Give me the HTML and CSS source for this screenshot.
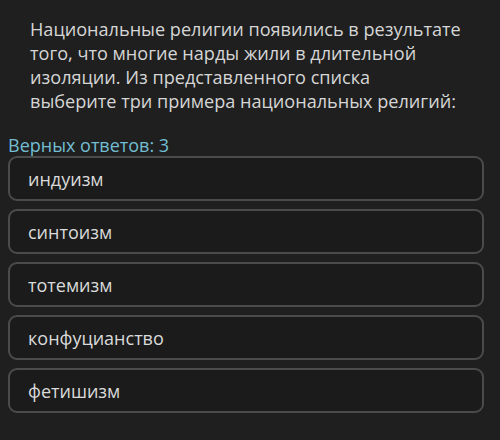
FILE: index.html
```html
<!DOCTYPE html>
<html lang="ru">
<head>
    <meta charset="UTF-8">
    <title>Тест</title>
    <link rel="stylesheet" href="styles.css">
</head>
<body>
    <div class="question">
        Национальные религии появились в результате<br>
        того, что многие нарды жили в длительной<br>
        изоляции. Из представленного списка<br>
        выберите три примера национальных религий:
    </div>
    <div class="answers-count">Верных ответов: 3</div>
    <ul class="options">
        <li>индуизм</li>
        <li>синтоизм</li>
        <li>тотемизм</li>
        <li>конфуцианство</li>
        <li>фетишизм</li>
    </ul>
</body>
</html>
```

FILE: styles.css
```css
body {
    margin: 0;
    background-color: #1f1f1f;
    font-family: "Open Sans", Arial, sans-serif;
    color: #d6d6d6;
    width: 500px;
    height: 440px;
}
.question {
    padding: 17px 20px 0 30px;
    font-size: 18.1px;
    line-height: 24px;
    white-space: nowrap;
}
.answers-count {
    margin-top: 22px;
    padding-left: 8px;
    color: #72bdd2;
    font-size: 18px;
    line-height: 20px;
}
.options {
    list-style-type: none;
    margin: 1px 0 0 0;
    padding: 0 16px 0 8px;
    display: flex;
    flex-direction: column;
    gap: 8px;
}
.options li {
    height: 41px;
    border: 2px solid #4b4b4b;
    border-radius: 9px;
    background-color: #1b1b1b;
    padding-left: 18px;
    display: flex;
    align-items: center;
    font-size: 18px;
    color: #dadada;
}
```
